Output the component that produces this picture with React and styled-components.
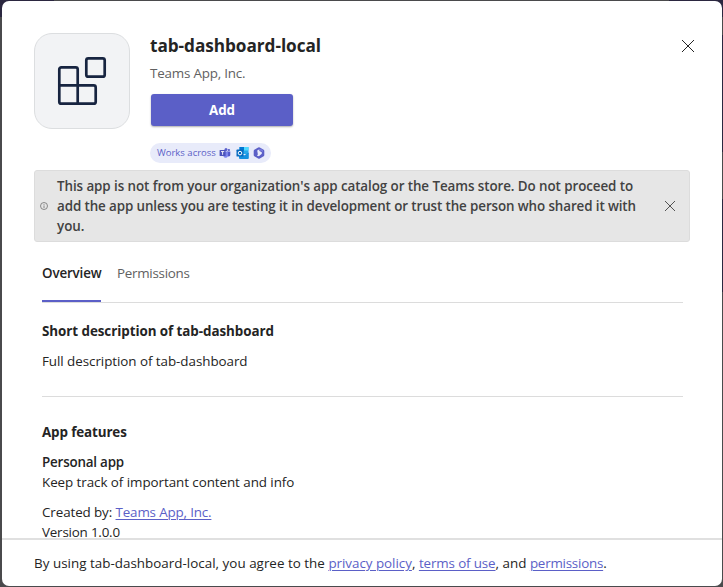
import React from "react";
import styled, { createGlobalStyle } from "styled-components";

const GlobalStyle = createGlobalStyle`
  * { box-sizing: border-box; }
  html, body { margin: 0; padding: 0; }
  body {
    font-family: "Open Sans", "Noto Sans", sans-serif;
    font-size: 13.4px;
    line-height: 20px;
    color: #242424;
    overflow: hidden;
  }
`;

const Backdrop = styled.div`
  width: 723px;
  height: 587px;
  padding: 1px 1px 1px 2px;
  background:
    linear-gradient(#2b2740, #2b2740) 0 0 / 54px 17px no-repeat,
    linear-gradient(#2b2740, #2b2740) 100% 0 / 54px 17px no-repeat,
    linear-gradient(#2b2740, #2b2740) 100% 35px / 8px 117px no-repeat,
    linear-gradient(#2b2740, #2b2740) 100% 199px / 8px 93px no-repeat,
    #4a4a4c;
`;

const Dialog = styled.div`
  display: flex;
  flex-direction: column;
  height: 585px;
  background: #fff;
  border-radius: 7px;
  overflow: hidden;
`;

const Content = styled.div`
  height: 537px;
  padding: 32px 32px 0;
  overflow: hidden;
`;

const Header = styled.header`
  display: flex;
  height: 137px;
`;

const AppIcon = styled.div`
  width: 96px;
  height: 96px;
  border: 1px solid #dcdee0;
  border-radius: 18px;
  background: #f2f3f5;
  svg { display: block; margin: 22px; }
`;

const HeaderInfo = styled.div`
  flex: 1;
  margin-left: 20px;
`;

const Title = styled.h1`
  margin: 0;
  padding-top: 1px;
  font-size: 17.2px;
  line-height: 24px;
  font-weight: 700;
  letter-spacing: -0.04px;
`;

const Publisher = styled.div`
  margin-top: 5px;
  color: #616161;
`;

const AddButton = styled.button`
  display: block;
  width: 142px;
  height: 32px;
  margin: 11px 0 0 1px;
  padding: 0;
  border: 0;
  border-radius: 3px;
  background: #5b5fc7;
  box-shadow: 0 1px 2px rgba(0, 0, 0, 0.32);
  color: #fff;
  font: 700 13.4px/32px "Open Sans", sans-serif;
`;

const WorksAcross = styled.div`
  display: flex;
  align-items: center;
  width: 121px;
  height: 20px;
  margin-top: 17px;
  padding-left: 7px;
  border-radius: 10px;
  background: #e8ebfa;
  color: #5b5fc7;
  font-size: 9.5px;
  svg { margin-left: 4px; flex: none; }
  svg + svg { margin-left: 5px; }
  svg + svg + svg { margin-left: 4px; }
  span { width: 58px; white-space: nowrap; }
`;

const CloseButton = styled.button`
  display: flex;
  align-items: center;
  justify-content: center;
  flex: none;
  width: 24px;
  height: 24px;
  padding: 0;
  border: 0;
  background: transparent;
  color: ${(p) => p.$color};
  margin-right: ${(p) => p.$shift || 0}px;
  margin-top: ${(p) => p.$top || 0}px;
`;

const Banner = styled.div`
  display: flex;
  align-items: center;
  width: 656px;
  height: 72px;
  padding: 0 7px 0 5px;
  border: 1px solid #dcdcdc;
  border-radius: 3px;
  background: #e6e6e6;
  color: #424242;
  font-weight: 600;
  > svg { flex: none; }
`;

const BannerText = styled.div`
  flex: 1;
  margin-left: 9px;
  white-space: nowrap;
`;

const Line = styled.div`
  width: max-content;
  white-space: nowrap;
  letter-spacing: ${(p) => p.$track || 0}px;
`;

const Tabs = styled.nav`
  display: flex;
  gap: 16px;
  width: 641px;
  height: 40px;
  margin: 21px 0 0 8px;
  border-bottom: 1px solid #dcdcdc;
`;

const Tab = styled.div`
  height: 39px;
  width: ${(p) => p.$width}px;
  white-space: nowrap;
  color: ${(p) => (p.$active ? "#242424" : "#616161")};
  font-weight: ${(p) => (p.$active ? 600 : 400)};
  letter-spacing: ${(p) => p.$track || 0}px;
  border-bottom: 2px solid ${(p) => (p.$active ? "#5b5fc7" : "transparent")};
`;

const Section = styled.section`
  width: 641px;
  margin-left: 8px;
  padding-top: ${(p) => p.$top}px;
  height: ${(p) => p.$height}px;
  border-bottom: ${(p) => (p.$ruled ? "1px solid #dcdcdc" : "0")};
`;

const Heading = styled.h2`
  width: max-content;
  margin: 0 0 10px;
  font-size: 13.4px;
  line-height: 20px;
  font-weight: 700;
  letter-spacing: ${(p) => p.$track || 0}px;
`;

const Feature = styled(Line)`
  font-weight: 600;
`;

const Meta = styled.div`
  margin-top: 10px;
`;

const Link = styled.a`
  color: #5b5fc7;
  letter-spacing: ${(p) => p.$track || 0}px;
  text-decoration: underline;
  text-decoration-thickness: 1px;
  text-underline-offset: 2px;
`;

const Footer = styled.footer`
  flex: 1;
  padding: 13px 32px 0;
  border-top: 2px solid #e0e0e0;
`;

function CloseIcon({ size, weight }) {
  return (
    <svg width={size} height={size} viewBox={`0 0 ${size} ${size}`} stroke="currentColor" strokeWidth={weight}>
      <path d={`M0 0L${size} ${size}M${size} 0L0 ${size}`} />
    </svg>
  );
}

function BlocksIcon() {
  return (
    <svg width="50" height="50" fill="none" stroke="#172440" strokeWidth="2.7">
      <rect x="29.3" y="2.3" width="18.4" height="18.4" rx="2" />
      <path d="M4.3 11.3h14.4a2 2 0 0 1 2 2V29.4H36.7a2 2 0 0 1 2 2V45.7a2 2 0 0 1-2 2H4.3a2 2 0 0 1-2-2V13.3a2 2 0 0 1 2-2zM2.3 29.4h18.4v18.3" />
    </svg>
  );
}

function TeamsIcon() {
  return (
    <svg width="12" height="12" viewBox="0 0 12 12">
      <circle cx="7" cy="2.5" r="1.5" fill="#5b60cc" />
      <circle cx="9.9" cy="3" r="1.1" fill="#5059c9" />
      <path d="M8 4.5h3.3v3.2a1.7 1.7 0 0 1-2.7 1.4z" fill="#5059c9" />
      <path d="M4.5 4.5h4.6v4a2.4 2.4 0 0 1-4.6.9z" fill="#7b83eb" />
      <rect x=".6" y="3" width="6" height="6" rx=".5" fill="#4b53bc" />
      <path d="M2 4.6h3.2M3.6 4.6v3.2" stroke="#fff" strokeWidth=".9" />
    </svg>
  );
}

function OutlookIcon() {
  return (
    <svg width="13" height="12" viewBox="0 0 13 12">
      <rect x="3.5" y="0" width="9" height="7" rx=".5" fill="#28a8ea" />
      <path d="M8 0h4.5v3.4H8z" fill="#50d9ff" />
      <path d="M3.5 0H8v3.4H3.5z" fill="#0078d4" />
      <path d="M3 5.6l5 3 4.8-3V11a1 1 0 0 1-1 1H4a1 1 0 0 1-1-1z" fill="#1490df" />
      <rect x=".5" y="2.6" width="7" height="7" rx=".6" fill="#0369bf" />
      <circle cx="4" cy="6.1" r="1.8" fill="none" stroke="#fff" strokeWidth="1" />
    </svg>
  );
}

function MicrosoftIcon() {
  return (
    <svg width="12" height="12" viewBox="0 0 12 12">
      <path d="M5.2.5Q6 .1 6.8.5l3.9 2.3q.6.4.6 1.1v4.2q0 .7-.6 1.1l-3.9 2.3q-.8.4-1.6 0L1.3 9.200q-.6-.4-.6-1.1V3.900q0-.7.6-1.1z" fill="#5b5fc7" />
      <path d="M4.200 3.400L6.400 2.200v1.700l2.400 1.400v1.500L5.900 9.200 3.800 8.500 4.900 7.500z" fill="#e8ebfa" />
      <path d="M7.200 1.400l2.800 1.700v1.800L6.400 3.200z" fill="#7579dc" />
    </svg>
  );
}

function InfoIcon() {
  return (
    <svg width="8" height="8" viewBox="0 0 8 8" fill="none" stroke="#707070" strokeWidth=".8">
      <circle cx="4" cy="4" r="3.5" />
      <path d="M4 2v.8M4 3.4V6" />
    </svg>
  );
}

export default function App() {
  return (
    <>
      <GlobalStyle />
      <Backdrop>
        <Dialog>
          <Content>
            <Header>
              <AppIcon><BlocksIcon /></AppIcon>
              <HeaderInfo>
                <Title>tab-dashboard-local</Title>
                <Publisher><Line $track={-0.2}>Teams App, Inc.</Line></Publisher>
                <AddButton>Add</AddButton>
                <WorksAcross><span>Works across</span><TeamsIcon /><OutlookIcon /><MicrosoftIcon /></WorksAcross>
              </HeaderInfo>
              <CloseButton $color="#242424" $shift={-10} $top={1} aria-label="Close"><CloseIcon size={12} weight={1} /></CloseButton>
            </Header>
            <Banner>
              <InfoIcon />
              <BannerText>
                <Line $track={-0.08}>This app is not from your organization's app catalog or the Teams store. Do not proceed to</Line>
                <Line $track={-0.11}>add the app unless you are testing it in development or trust the person who shared it with</Line>
                <Line>you.</Line>
              </BannerText>
              <CloseButton $color="#424242" aria-label="Dismiss"><CloseIcon size={10} weight={0.9} /></CloseButton>
            </Banner>
            <Tabs>
              <Tab $active $width={59} $track={-0.15}>Overview</Tab>
              <Tab $width={73} $track={-0.28}>Permissions</Tab>
            </Tabs>
            <Section $top={18} $height={94} $ruled>
              <Heading $track={-0.06}>Short description of tab-dashboard</Heading>
              <Line $track={-0.05}>Full description of tab-dashboard</Line>
            </Section>
            <Section $top={25} $height={160}>
              <Heading $track={-0.12}>App features</Heading>
              <Feature $track={-0.2}>Personal app</Feature>
              <Line $track={-0.06}>Keep track of important content and info</Line>
              <Meta>
                <Line $track={-0.1}>Created by: <Link $track={-0.16}>Teams App, Inc.</Link></Line>
                <Line $track={-0.2}>Version 1.0.0</Line>
              </Meta>
            </Section>
          </Content>
          <Footer>
            <Line $track={0.02}>
              By using tab-dashboard-local, you agree to the <Link $track={-0.03}>privacy policy</Link>,{" "}
              <Link $track={-0.13}>terms of use</Link>, and <Link $track={-0.23}>permissions</Link>.
            </Line>
          </Footer>
        </Dialog>
      </Backdrop>
    </>
  );
}
